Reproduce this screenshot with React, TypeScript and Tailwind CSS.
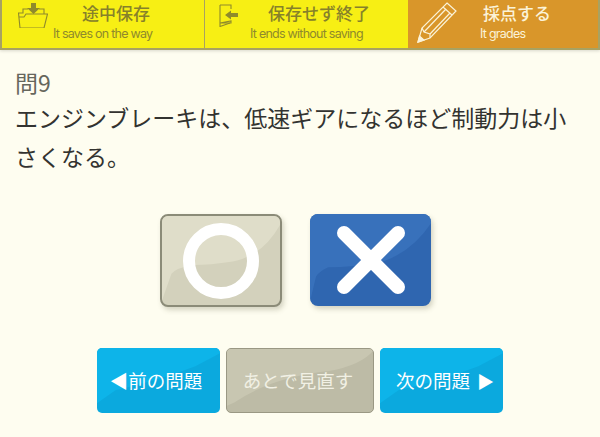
import React from "react";

const jp = "font-['Noto_Sans_CJK_JP','Noto_Sans',sans-serif]";
const en = "font-['Inter','Liberation_Sans',sans-serif]";

function FolderIcon() {
  return (
    <svg width="30" height="26" viewBox="0 0 30 26" fill="none" stroke="#8f8a2c" strokeWidth="1.1">
      <path d="M2 26 L0.5 11 L5 11 L5 7 L10 7" />
      <path d="M2 26 L26 26 L29.5 12 L8 12 L6 15 L1 15" />
      <path d="M21 7 L26 7 L26 12" />
      <path d="M13 1 H18 V6 H22 L15.5 12 L9 6 H13 Z" fill="#8f8a2c" stroke="none" />
    </svg>
  );
}

function DoorIcon() {
  return (
    <svg width="20" height="23" viewBox="0 0 20 23" fill="none" stroke="#8f8a2c" strokeWidth="1.1">
      <path d="M1 1 H12 V5 M12 17 V19 L1 19 Z" />
      <path d="M1 1 V22.5 L11 19" />
      <path d="M6 11 L12 6.5 V9 H19 V13 H12 V15.5 Z" fill="#8f8a2c" stroke="none" />
    </svg>
  );
}

function PencilIcon() {
  return (
    <svg width="40" height="41" viewBox="0 0 40 41" fill="none" stroke="#fbf3d8" strokeWidth="1.2">
      <path d="M30 1 L39 9 L13 36 L1 40 L5 26 Z" />
      <path d="M5 26 L7 30 L13 32 L13 36" />
      <path d="M26 5 L35 13" />
      <path d="M7 30 L29 7" />
      <path d="M13 32 L33 11" />
      <path d="M1 40 L2.5 34 L7 38 Z" fill="#fbf3d8" />
    </svg>
  );
}

function TopTab({
  icon,
  title,
  sub,
  className,
  iconBox,
  titleBox,
  subBox,
  subColor,
  titleColor,
}: {
  icon: React.ReactNode;
  title: string;
  sub: string;
  className: string;
  iconBox: string;
  titleBox: string;
  subBox: string;
  subColor: string;
  titleColor: string;
}) {
  return (
    <div className={"relative h-full " + className}>
      <div className={"absolute " + iconBox}>{icon}</div>
      <p className={jp + " pt-[3px] text-[17px] font-medium leading-[20px] " + titleBox + " " + titleColor}>{title}</p>
      <p className={en + " mt-[3px] text-[12.5px] leading-[16px] tracking-[-0.75px] " + subBox + " " + subColor}>{sub}</p>
    </div>
  );
}

function Gloss({ d, fill }: { d: string; fill: string }) {
  return (
    <svg className="absolute inset-0 h-full w-full" viewBox="0 0 100 100" preserveAspectRatio="none">
      <path d={d} fill={fill} />
    </svg>
  );
}

function NavButton({ children, tone, pad }: { children: React.ReactNode; tone: "blue" | "gray"; pad: string }) {
  const cls =
    tone === "blue"
      ? "w-[123px] bg-[#0ba9de] text-white"
      : "w-[148px] bg-[#bdbba6] border border-[#9a9884] text-[#f1f0e4]";
  return (
    <button className={"relative flex h-[65px] items-center justify-center overflow-hidden rounded-[5px] " + pad + " " + cls}>
      <Gloss
        d={tone === "blue" ? "M0 0 H100 V8 L80 28 Q50 50 15 65 L0 85 Z" : "M0 0 H100 V3 Q92 25 70 35 Q30 45 5 85 L0 90 Z"}
        fill={tone === "blue" ? "#0db4e9" : "#c8c6b1"}
      />
      <span className={jp + " relative text-[18.5px] font-normal"}>{children}</span>
    </button>
  );
}

export default function App() {
  return (
    <div className="flex h-[437px] w-[600px] flex-col overflow-hidden bg-[#fefdf0]">
      <header className="flex h-[50px] shrink-0 border-b-2 border-[#a8a262] shadow-[0_1px_3px_rgba(0,0,0,0.15)]">
        <TopTab
          className="w-[205px] border-l-2 border-r border-[#a8a262] bg-[#f7ef14]"
          iconBox="left-[16px] top-[2px]"
          titleBox="pl-[80px]"
          subBox="pl-[51px]"
          icon={<FolderIcon />}
          title="途中保存"
          sub="It saves on the way"
          titleColor="text-[#86812a]"
          subColor="text-[#8f8a2c]"
        />
        <TopTab
          className="w-[203px] bg-[#f7ef14]"
          iconBox="left-[14px] top-[4px]"
          titleBox="pl-[63px]"
          subBox="pl-[45px]"
          icon={<DoorIcon />}
          title="保存せず終了"
          sub="It ends without saving"
          titleColor="text-[#86812a]"
          subColor="text-[#8f8a2c]"
        />
        <TopTab
          className="flex-1 border-r-2 border-[#a8a262] bg-[#d9962a]"
          iconBox="left-[9px] top-[2px]"
          titleBox="pl-[75px]"
          subBox="pl-[72px]"
          icon={<PencilIcon />}
          title="採点する"
          sub="It grades"
          titleColor="text-[#fbf3d8]"
          subColor="text-[#fbf3d8]"
        />
      </header>

      <main className={jp + " pl-[15px] pr-[16px] pt-[17px] text-[#333330]"}>
        <p className="text-[23px] leading-[31px] text-[#66665c]">問9</p>
        <p className="text-[23px] leading-[39px]">エンジンブレーキは、低速ギアになるほど制動力は小さくなる。</p>
      </main>

      <div className="mt-[38px] flex gap-[28px] pl-[160px]">
        <button className="relative flex h-[93px] w-[122px] items-center justify-center overflow-hidden rounded-[8px] border-2 border-[#8b8b78] bg-[#d3d1bc] shadow-[2px_3px_5px_rgba(90,90,60,0.25)]">
          <Gloss d="M0 0 H100 V10 Q85 45 60 51 Q40 55 27 55 Q12 58 8 65 L0 95 Z" fill="#dfddc9" />
          <span className="relative h-[76px] w-[76px] rounded-full border-[12px] border-white" />
        </button>
        <button className="relative flex h-[92px] w-[121px] items-center justify-center overflow-hidden rounded-[8px] bg-[#2f66b0] shadow-[2px_3px_5px_rgba(90,90,60,0.25)]">
          <Gloss d="M0 0 H100 V10 Q85 40 60 52 Q35 58 15 58 Q8 62 5 68 L0 95 Z" fill="#3871bb" />
          <svg className="relative" width="72" height="72" viewBox="0 0 72 72">
            <path d="M9 9 L63 63 M63 9 L9 63" stroke="#fff" strokeWidth="14" strokeLinecap="round" />
          </svg>
        </button>
      </div>

      <div className="mt-[41px] flex justify-center gap-[6px]">
        <NavButton tone="blue" pad="pr-[5px]">◀前の問題</NavButton>
        <NavButton tone="gray" pad="pr-[4px]">あとで見直す</NavButton>
        <NavButton tone="blue" pad="pl-[7px]">
          次の問題<span className="ml-[7px] text-[17px]">▶</span>
        </NavButton>
      </div>
    </div>
  );
}
